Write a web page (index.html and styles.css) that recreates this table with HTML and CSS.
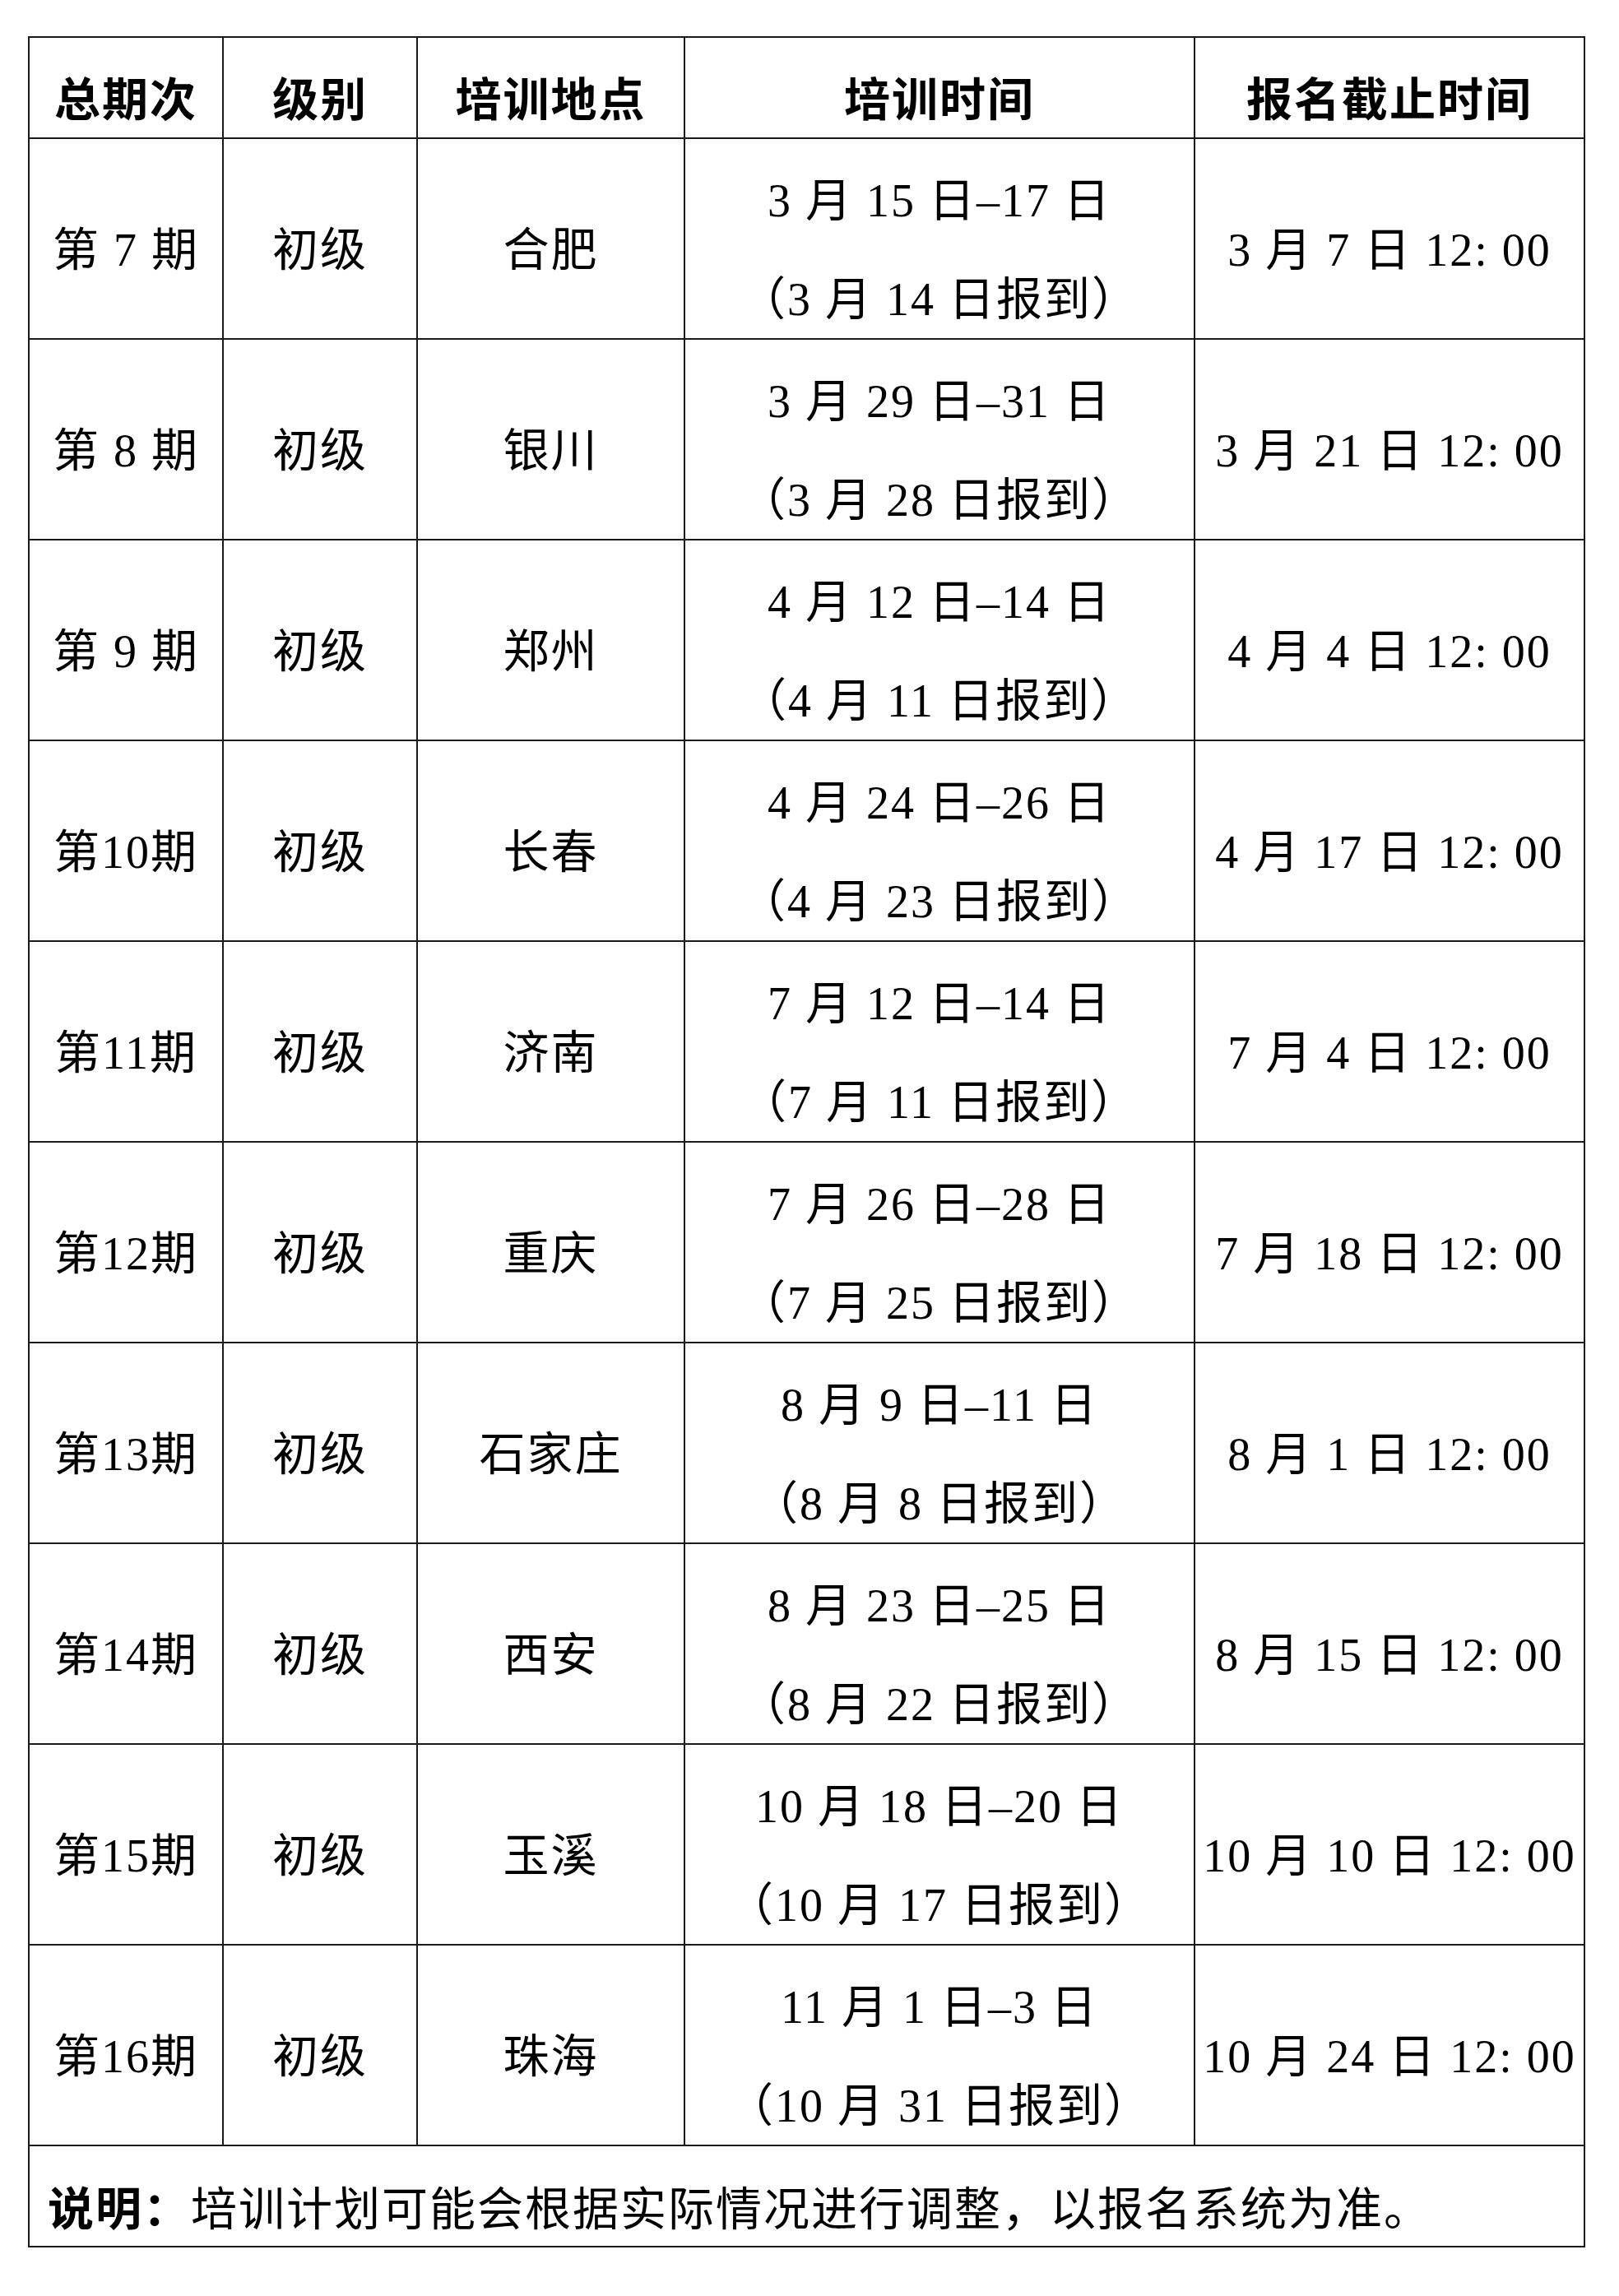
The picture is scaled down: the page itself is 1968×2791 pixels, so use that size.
FILE: index.html
```html
<!DOCTYPE html>
<html lang="zh-CN">
<head>
<meta charset="utf-8">
<title>培训计划</title>
<link rel="stylesheet" href="styles.css">
</head>
<body>
<table class="plan">
  <colgroup>
    <col class="c-no">
    <col class="c-level">
    <col class="c-place">
    <col class="c-time">
    <col class="c-deadline">
  </colgroup>
  <thead>
    <tr class="head">
      <th>总期次</th>
      <th>级别</th>
      <th>培训地点</th>
      <th>培训时间</th>
      <th>报名截止时间</th>
    </tr>
  </thead>
  <tbody>
    <tr class="row">
      <td>第 7 期</td><td>初级</td><td>合肥</td>
      <td><div class="when"><span>3 月 15 日–17 日</span><span>（3 月 14 日报到）</span></div></td>
      <td>3 月 7 日 12: 00</td>
    </tr>
    <tr class="row">
      <td>第 8 期</td><td>初级</td><td>银川</td>
      <td><div class="when"><span>3 月 29 日–31 日</span><span>（3 月 28 日报到）</span></div></td>
      <td>3 月 21 日 12: 00</td>
    </tr>
    <tr class="row">
      <td>第 9 期</td><td>初级</td><td>郑州</td>
      <td><div class="when"><span>4 月 12 日–14 日</span><span>（4 月 11 日报到）</span></div></td>
      <td>4 月 4 日 12: 00</td>
    </tr>
    <tr class="row">
      <td>第10期</td><td>初级</td><td>长春</td>
      <td><div class="when"><span>4 月 24 日–26 日</span><span>（4 月 23 日报到）</span></div></td>
      <td>4 月 17 日 12: 00</td>
    </tr>
    <tr class="row">
      <td>第11期</td><td>初级</td><td>济南</td>
      <td><div class="when"><span>7 月 12 日–14 日</span><span>（7 月 11 日报到）</span></div></td>
      <td>7 月 4 日 12: 00</td>
    </tr>
    <tr class="row">
      <td>第12期</td><td>初级</td><td>重庆</td>
      <td><div class="when"><span>7 月 26 日–28 日</span><span>（7 月 25 日报到）</span></div></td>
      <td>7 月 18 日 12: 00</td>
    </tr>
    <tr class="row">
      <td>第13期</td><td>初级</td><td>石家庄</td>
      <td><div class="when"><span>8 月 9 日–11 日</span><span>（8 月 8 日报到）</span></div></td>
      <td>8 月 1 日 12: 00</td>
    </tr>
    <tr class="row">
      <td>第14期</td><td>初级</td><td>西安</td>
      <td><div class="when"><span>8 月 23 日–25 日</span><span>（8 月 22 日报到）</span></div></td>
      <td>8 月 15 日 12: 00</td>
    </tr>
    <tr class="row">
      <td>第15期</td><td>初级</td><td>玉溪</td>
      <td><div class="when"><span>10 月 18 日–20 日</span><span>（10 月 17 日报到）</span></div></td>
      <td>10 月 10 日 12: 00</td>
    </tr>
    <tr class="row">
      <td>第16期</td><td>初级</td><td>珠海</td>
      <td><div class="when"><span>11 月 1 日–3 日</span><span>（10 月 31 日报到）</span></div></td>
      <td>10 月 24 日 12: 00</td>
    </tr>
    <tr class="note">
      <td colspan="5"><strong>说明：</strong>培训计划可能会根据实际情况进行调整，以报名系统为准。</td>
    </tr>
  </tbody>
</table>
</body>
</html>
```

FILE: styles.css
```css
html, body {
  margin: 0;
  padding: 0;
  background: #ffffff;
}

body {
  padding: 44px 0 0 34px;
  font-family: "Liberation Serif", "Noto Sans CJK SC", serif;
  color: #000000;
}

.plan {
  border-collapse: collapse;
  table-layout: fixed;
  width: 1891px;
  font-size: 56px;
  letter-spacing: 2px;
  line-height: 64px;
}

.c-no { width: 236px; }
.c-level { width: 236px; }
.c-place { width: 325px; }
.c-time { width: 620px; }
.c-deadline { width: 474px; }

.plan th,
.plan td {
  border: 2px solid #1a1a1a;
  text-align: center;
  vertical-align: middle;
  padding: 28px 0 0 0;
  white-space: nowrap;
}

.plan th {
  font-weight: 700;
}

.head {
  height: 123px;
}

.head th {
  padding-top: 30px;
}

.row {
  height: 244px;
}

.when {
  display: flex;
  flex-direction: column;
  align-items: center;
  gap: 56px;
}

.note {
  height: 123px;
}

.note td {
  text-align: left;
  padding: 32px 0 0 22px;
}

.note strong {
  font-weight: 700;
}
```
